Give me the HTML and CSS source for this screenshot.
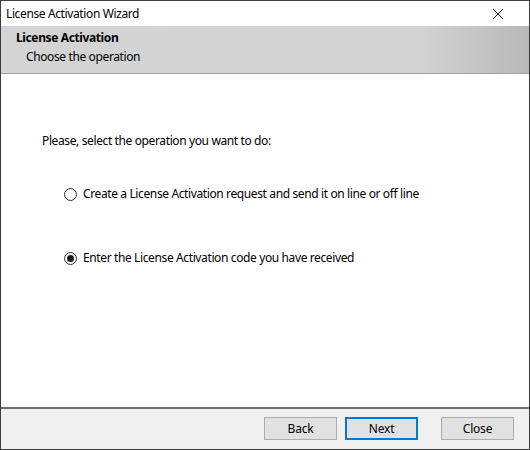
FILE: index.html
```html
<!DOCTYPE html>
<html>
<head>
<meta charset="utf-8">
<link rel="stylesheet" href="styles.css">
</head>
<body>
<div class="window">
  <div class="titlebar">
    <span class="title">License Activation Wizard</span>
    <svg class="close-x" width="12" height="12" viewBox="0 0 12 12"><path d="M1 1 L11 11 M11 1 L1 11" stroke="#111" stroke-width="1" fill="none"/></svg>
  </div>
  <div class="header">
    <div class="h-title">License Activation</div>
    <div class="h-sub">Choose the operation</div>
  </div>
  <div class="content">
    <div class="prompt">Please, select the operation you want to do:</div>
    <label class="option opt1"><span class="radio"></span><span>Create a License Activation request and send it on line or off line</span></label>
    <label class="option opt2"><span class="radio checked"></span><span>Enter the License Activation code you have received</span></label>
  </div>
  <div class="footer">
    <button class="btn">Back</button>
    <button class="btn default">Next</button>
    <button class="btn close">Close</button>
  </div>
</div>
</body>
</html>
```
FILE: styles.css
```css
html, body { margin: 0; padding: 0; }
body {
  font-family: "Noto Sans", "Open Sans", sans-serif;
  font-size: 12px;
  letter-spacing: -0.38px;
  color: #000;
  background: #fff;
}
.window {
  width: 530px;
  height: 450px;
  box-sizing: border-box;
  border: 1px solid #3c3c3c;
  display: flex;
  flex-direction: column;
  background: #fff;
}
.titlebar {
  height: 25px;
  display: flex;
  align-items: center;
  justify-content: space-between;
  padding: 0 25px 0 5px;
  background: #fff;
}
.title { line-height: 25px; }
.header {
  height: 47px;
  border-bottom: 1px solid #a0a0a0;
  background: linear-gradient(to right, #d4d4d4 0%, #d2d2d2 80%, #b8b8b8 100%);
  box-sizing: content-box;
}
.h-title {
  font-weight: bold;
  padding-left: 15px;
  margin-top: 4px;
  line-height: 16px;
}
.h-sub {
  padding-left: 25px;
  margin-top: 3px;
  line-height: 16px;
}
.content {
  flex: 1;
  border-top: 1px solid #fff;
  border-bottom: 2px solid #6e6e6e;
  display: flex;
  flex-direction: column;
  padding-left: 41px;
}
.prompt {
  margin-top: 58px;
  line-height: 16px;
}
.option {
  display: flex;
  align-items: center;
  line-height: 16px;
  padding-left: 22px;
  gap: 6px;
}
.opt1 { margin-top: 37px; }
.opt2 { margin-top: 48px; }
.radio {
  width: 13px;
  height: 13px;
  box-sizing: border-box;
  border: 1px solid #333;
  border-radius: 50%;
  background: #fff;
  position: relative;
  flex: none;
}
.radio.checked::after {
  content: "";
  position: absolute;
  left: 2px;
  top: 2px;
  width: 7px;
  height: 7px;
  border-radius: 50%;
  background: #1a1a1a;
}
.footer {
  height: 40px;
  background: #f0f0f0;
  display: flex;
  align-items: flex-start;
  padding-top: 8px;
  padding-left: 263px;
  box-sizing: border-box;
}
.btn {
  width: 73px;
  height: 23px;
  font-family: inherit;
  font-size: 12px;
  letter-spacing: -0.2px;
  background: #e1e1e1;
  border: 1px solid #adadad;
  color: #000;
  padding: 0;
  margin: 0 8px 0 0;
}
.btn.default {
  border: 2px solid #0078d7;
}
.btn.close { margin-left: 15px; }
```
